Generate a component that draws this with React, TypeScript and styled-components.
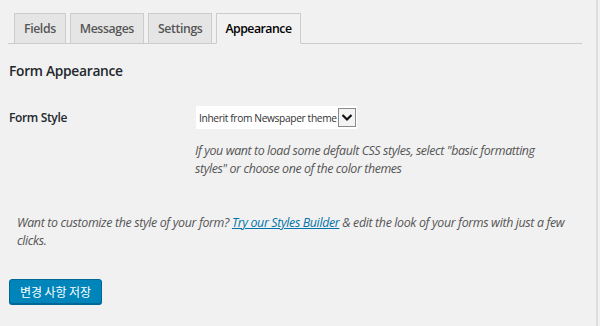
import React from "react";
import styled, { createGlobalStyle } from "styled-components";

const Global = createGlobalStyle`
  html, body { margin: 0; padding: 0; background: #f1f1f1; }
  body { font-family: "Open Sans", "Noto Sans", sans-serif; color: #23282d; }
`;

const Page = styled.div`
  width: 598px;
  height: 326px;
  border-right: 2px solid #dedede;
  box-sizing: border-box;
  overflow: hidden;
`;

const TabBar = styled.div`
  display: flex;
  align-items: flex-end;
  gap: 4px;
  margin: 13px 0 0 8px;
  width: 574px;
  padding-left: 6px;
  box-sizing: border-box;
  border-bottom: 1px solid #cccccc;
  height: 31px;
`;

const Tab = styled.div<{ $active?: boolean }>`
  box-sizing: border-box;
  height: 31px;
  margin-bottom: -1px;
  padding: 0 ${(p) => (p.$active ? "8px" : "9px")};
  display: flex;
  align-items: center;
  font-size: 12.3px;
  font-weight: 600;
  letter-spacing: ${(p) => (p.$active ? "-0.5px" : "-0.4px")};
  color: ${(p) => (p.$active ? "#000" : "#555")};
  background: ${(p) => (p.$active ? "#f1f1f1" : "#e5e5e5")};
  border: 1px solid #cccccc;
  border-bottom-color: ${(p) => (p.$active ? "#f1f1f1" : "#cccccc")};
`;

const Content = styled.div`
  padding: 0 0 0 9px;
`;

const Heading = styled.h2`
  margin: 17px 0 0;
  font-size: 13.8px;
  font-weight: 600;
  line-height: 20px;
  letter-spacing: -0.3px;
  color: #23282d;
`;

const FormRow = styled.div`
  display: grid;
  grid-template-columns: 187px 1fr;
  margin-top: 25px;
`;

const Label = styled.div`
  font-size: 12px;
  font-weight: 600;
  letter-spacing: -0.35px;
  line-height: 24px;
  color: #23282d;
`;

const Field = styled.div`
  display: flex;
  flex-direction: column;
`;

const Select = styled.div`
  width: 161px;
  height: 23px;
  background: #fff;
  display: flex;
  align-items: center;
  justify-content: space-between;
  padding: 0 1px 0 3px;
  box-sizing: border-box;
  font-size: 10.2px;
  letter-spacing: -0.35px;
  white-space: nowrap;
  color: #333;
`;

const Arrow = styled.span`
  width: 16px;
  height: 17px;
  border: 1px solid #8a8a8a;
  background: #f4f4f4;
  display: flex;
  align-items: center;
  justify-content: center;
`;

const Desc = styled.p`
  margin: 13px 0 0 -1px;
  font-size: 12.4px;
  font-style: italic;
  line-height: 18px;
  letter-spacing: -0.4px;
  color: #555;
  width: 350px;
`;

const Note = styled.p`
  margin: 36px 0 0 8px;
  font-size: 12.4px;
  font-style: italic;
  line-height: 18px;
  letter-spacing: -0.35px;
  color: #555;
  width: 566px;
`;

const Link = styled.a`
  color: #0073aa;
  text-decoration: underline;
`;

const SaveButton = styled.button`
  margin-top: 29px;
  height: 25px;
  padding: 0 10px;
  background: #0085ba;
  border: 1px solid #006799;
  border-radius: 3px;
  color: #fff;
  font-family: "Noto Sans CJK KR", sans-serif;
  font-size: 12px;
  letter-spacing: -0.1px;
  line-height: 23px;
  box-shadow: 0 1px 0 #006799;
`;

export default function App() {
  return (
    <Page>
      <Global />
      <TabBar>
        <Tab>Fields</Tab>
        <Tab>Messages</Tab>
        <Tab>Settings</Tab>
        <Tab $active>Appearance</Tab>
      </TabBar>
      <Content>
        <Heading>Form Appearance</Heading>
        <FormRow>
          <Label>Form Style</Label>
          <Field>
            <Select>
              <span>Inherit from Newspaper theme</span>
              <Arrow>
                <svg width="12" height="9" viewBox="0 0 12 9">
                  <path d="M1.5 2 L6 6.5 L10.5 2" fill="none" stroke="#111" strokeWidth="2.2" />
                </svg>
              </Arrow>
            </Select>
            <Desc>
              If you want to load some default CSS styles, select "basic formatting styles" or choose one of the color themes
            </Desc>
          </Field>
        </FormRow>
        <Note>
          Want to customize the style of your form? <Link href="#">Try our Styles Builder</Link> &amp; edit the look of your forms with just a few clicks.
        </Note>
        <SaveButton>변경 사항 저장</SaveButton>
      </Content>
    </Page>
  );
}
